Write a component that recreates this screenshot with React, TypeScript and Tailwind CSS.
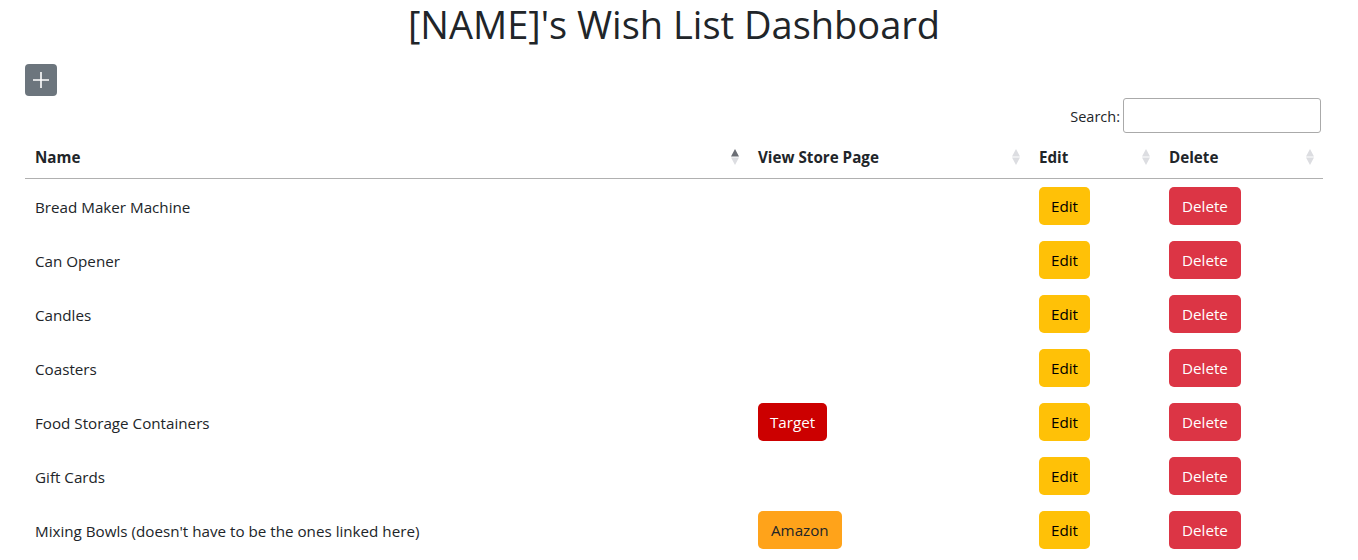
import React from 'react';

interface WishItem {
  name: string;
  store?: 'Target' | 'Amazon';
}

const items: WishItem[] = [
  { name: 'Bread Maker Machine' },
  { name: 'Can Opener' },
  { name: 'Candles' },
  { name: 'Coasters' },
  { name: 'Food Storage Containers', store: 'Target' },
  { name: 'Gift Cards' },
  { name: "Mixing Bowls (doesn't have to be the ones linked here)", store: 'Amazon' },
];

// DataTables style sort arrows; `active` darkens the up arrow
const SortIcon: React.FC<{ active?: boolean }> = ({ active }) => (
  <svg width="10" height="18" viewBox="0 0 10 18" className="shrink-0">
    <path d="M5 1 L9 8.5 L1 8.5 Z" fill={active ? '#6b6e75' : '#dcdde1'} />
    <path d="M5 17 L9 9.5 L1 9.5 Z" fill="#dcdde1" />
  </svg>
);

const HeaderCell: React.FC<{ label: string; width: string; active?: boolean }> = ({ label, width, active }) => (
  <th className={`${width} pl-[10px] pr-[8px] pt-[12px] pb-[9px] text-left font-bold`}>
    <div className="flex items-center justify-between">
      <span>{label}</span>
      <SortIcon active={active} />
    </div>
  </th>
);

const btn = 'h-[38px] pt-[2px] rounded-[5px]';

export default function App() {
  return (
    <div
      className="min-h-screen bg-white text-[#212529] text-[15.2px] px-[25px] pr-[35px]"
      style={{ fontFamily: '"Open Sans", "Noto Sans", sans-serif' }}
    >
      <h1 className="text-center text-[38px] leading-[48px] font-normal mb-4">[NAME]'s Wish List Dashboard</h1>

      <button className="w-8 h-8 rounded bg-[#6c757d] flex items-center justify-center">
        <svg width="20" height="20" viewBox="0 0 20 20">
          <path d="M10 2 V18 M2 10 H18" stroke="#fff" strokeWidth="1.6" />
        </svg>
      </button>

      <div className="flex justify-end items-center mt-[2px] pr-[2px]">
        <label className="text-[14.5px] mr-[3px] mt-[3px]">Search:</label>
        <input type="text" className="w-[198px] h-[35px] border border-[#aaa] rounded-[3px]" />
      </div>

      <table className="w-full border-collapse table-fixed mt-[1px]">
        <thead>
          <tr className="border-b border-[#b0b0b0]">
            <HeaderCell label="Name" width="w-[723px]" active />
            <HeaderCell label="View Store Page" width="w-[281px]" />
            <HeaderCell label="Edit" width="w-[130px]" />
            <HeaderCell label="Delete" width="w-[164px]" />
          </tr>
        </thead>
        <tbody>
          {items.map((it) => (
            <tr key={it.name} className="h-[54px]">
              <td className="px-[10px] pt-[10px] pb-[6px] align-middle">{it.name}</td>
              <td className="px-[10px] py-2">
                {it.store === 'Target' && (
                  <button className={`${btn} px-3 bg-[#cc0000] text-white`}>Target</button>
                )}
                {it.store === 'Amazon' && (
                  <button className={`${btn} px-[13px] bg-[#ffa31a] text-[#212529]`}>Amazon</button>
                )}
              </td>
              <td className="px-[10px] py-2">
                <button className={`${btn} px-3 bg-[#ffc107] text-black`}>Edit</button>
              </td>
              <td className="px-[10px] py-2">
                <button className={`${btn} px-[13px] bg-[#dc3545] text-white`}>Delete</button>
              </td>
            </tr>
          ))}
        </tbody>
      </table>
    </div>
  );
}
